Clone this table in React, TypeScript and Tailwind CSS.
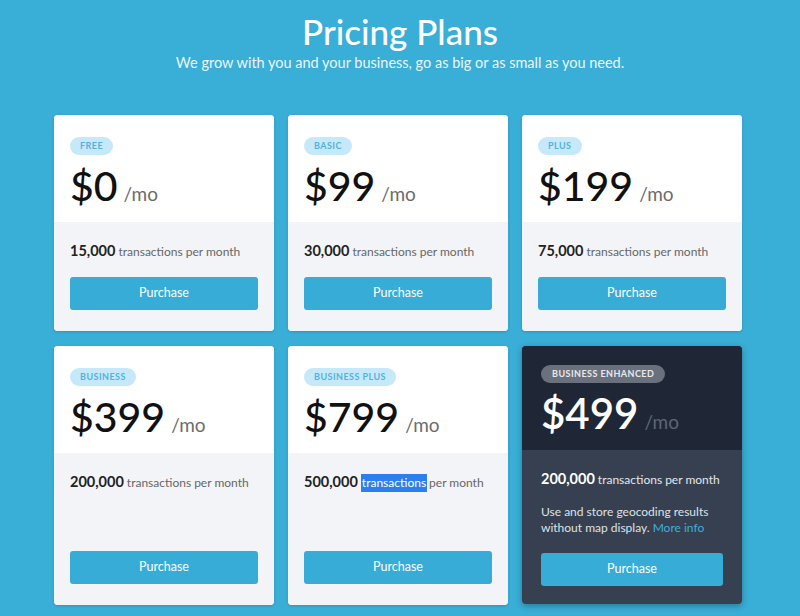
import React from "react";

type Plan = {
  tag: string;
  price: string;
  tx: string;
  highlight?: boolean;
};

const row1: Plan[] = [
  { tag: "FREE", price: "$0", tx: "15,000" },
  { tag: "BASIC", price: "$99", tx: "30,000" },
  { tag: "PLUS", price: "$199", tx: "75,000" },
];

function LightCard({ p }: { p: Plan }) {
  return (
    <div className="flex flex-col rounded-[4px] overflow-hidden bg-white shadow-[0_1px_3px_rgba(0,0,0,0.15)]">
      <div className="h-[107px] shrink-0 px-4 pt-[22px] bg-white">
        <div className="flex">
          <span className="flex h-[18px] items-center rounded-full bg-[#c6e9fa] px-[10px] text-[9px] font-bold tracking-[0.05em] text-[#52b2de]">
            {p.tag}
          </span>
        </div>
        <div className="mt-[8px] flex items-baseline">
          <span className="text-[41px] leading-[46px] text-[#111] font-medium">{p.price}</span>
          <span className="ml-[6px] text-[19px] text-[#6b6b6b]">/mo</span>
        </div>
      </div>
      <div className="flex flex-1 flex-col bg-[#f3f4f7] px-4 pt-[20px] pb-[21px]">
        <div className="flex items-baseline text-[#333] leading-[18px]">
          <span className="text-[14.5px] font-bold text-[#222]">{p.tx}</span>
          {p.highlight ? (
            <>
              <span className="ml-[3px] bg-[#2b7ff0] text-[12px] text-white px-[1px]">transactions</span>
              <span className="ml-[2px] text-[12px] text-[#666]">per month</span>
            </>
          ) : (
            <span className="ml-[3px] text-[12px] text-[#666]">transactions per month</span>
          )}
        </div>
        <div className="flex-1" />
        <button className="h-[33px] w-full rounded-[3px] bg-[#37acd6] text-[12.5px] text-white">
          Purchase
        </button>
      </div>
    </div>
  );
}

function DarkCard() {
  return (
    <div className="flex flex-col rounded-[4px] overflow-hidden bg-[#364050] shadow-[0_2px_6px_rgba(0,0,0,0.3)]">
      <div className="h-[104px] shrink-0 px-[19px] pt-[19px] bg-[#1f2736]">
        <div className="flex">
          <span className="flex h-[18px] items-center rounded-full bg-[#6a707c] px-[11px] text-[9px] font-bold tracking-[0.05em] text-[#e8e9eb]">
            BUSINESS ENHANCED
          </span>
        </div>
        <div className="mt-[6px] flex items-baseline">
          <span className="text-[42px] leading-[48px] text-white font-semibold">$499</span>
          <span className="ml-[6px] text-[19px] text-[#5d6676]">/mo</span>
        </div>
      </div>
      <div className="flex flex-1 flex-col px-[19px] pt-[20px] pb-[18px]">
        <div className="flex items-baseline leading-[18px]">
          <span className="text-[14.5px] font-bold text-white">200,000</span>
          <span className="ml-[3px] text-[12px] text-[#e5e7eb]">transactions per month</span>
        </div>
        <p className="mt-[15px] text-[12px] leading-[16px] text-[#dfe2e6]">
          Use and store geocoding results
          <br />
          without map display. <span className="text-[#3bb0dc]">More info</span>
        </p>
        <div className="flex-1" />
        <button className="h-[33px] w-full rounded-[3px] bg-[#37acd6] text-[12.5px] text-white">
          Purchase
        </button>
      </div>
    </div>
  );
}

export default function App() {
  return (
    <div
      className="w-[800px] h-[616px] overflow-hidden bg-[#39aed6]"
      style={{ fontFamily: "Lato, 'Open Sans', sans-serif" }}
    >
      <div className="pt-[11px] text-center">
        <h1 className="text-[35px] leading-[40px] font-medium text-white">Pricing Plans</h1>
        <p className="mt-[2px] text-[14.5px] leading-[20px] text-[#eaf6fb]">
          We grow with you and your business, go as big or as small as you need.
        </p>
      </div>
      <div className="ml-[54px] mt-[42px] grid w-[688px] grid-cols-[220px_220px_220px] gap-x-[14px] gap-y-[15px]">
        {row1.map((p) => (
          <div key={p.tag} className="h-[216px] flex flex-col [&>div]:flex-1">
            <LightCard p={p} />
          </div>
        ))}
        <div className="h-[259px] flex flex-col [&>div]:flex-1">
          <LightCard p={{ tag: "BUSINESS", price: "$399", tx: "200,000" }} />
        </div>
        <div className="h-[259px] flex flex-col [&>div]:flex-1">
          <LightCard p={{ tag: "BUSINESS PLUS", price: "$799", tx: "500,000", highlight: true }} />
        </div>
        <div className="h-[258px] flex flex-col [&>div]:flex-1">
          <DarkCard />
        </div>
      </div>
    </div>
  );
}
